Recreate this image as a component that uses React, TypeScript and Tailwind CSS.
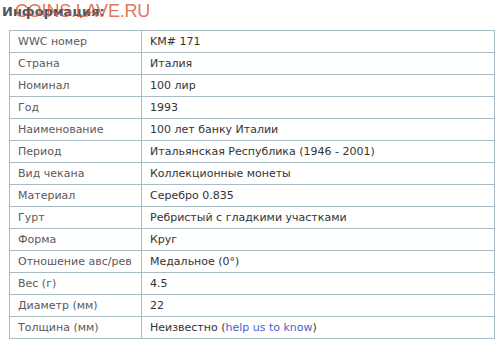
const rows: [string, React.ReactNode][] = [
  ["WWC номер", "KM# 171"],
  ["Страна", "Италия"],
  ["Номинал", "100 лир"],
  ["Год", "1993"],
  ["Наименование", "100 лет банку Италии"],
  ["Период", "Итальянская Республика (1946 - 2001)"],
  ["Вид чекана", "Коллекционные монеты"],
  ["Материал", "Серебро 0.835"],
  ["Гурт", "Ребристый с гладкими участками"],
  ["Форма", "Круг"],
  ["Отношение авс/рев", "Медальное (0°)"],
  ["Вес (г)", "4.5"],
  ["Диаметр (мм)", "22"],
  [
    "Толщина (мм)",
    <>
      Неизвестно (<a href="#" className="text-[#4a5fcf]">help us to know</a>)
    </>,
  ],
];

export default function App() {
  return (
    <div className="relative w-[500px] h-[352px] bg-white overflow-hidden font-['DejaVu_Sans',Verdana,sans-serif]">
      {/* Header */}
      <div className="relative h-[30px]">
        <h2 className="absolute left-[2px] top-[3px] text-[13px] font-bold text-[#4b5661] leading-[18px]">
          Информация:
        </h2>
        <div className="absolute left-[15px] top-[1px] text-[18px] leading-[20px] text-[#d9502a]/80 font-['Liberation_Sans',Arial,sans-serif] pointer-events-none tracking-[-0.2px]">
          COINS.LAVE.RU
        </div>
      </div>

      {/* Table */}
      <table className="ml-[9px] w-[486px] border-collapse text-[11px]">
        <tbody>
          {rows.map(([label, value], i) => (
            <tr key={i} className="h-[22px]">
              <td className="w-[132px] border border-[#a9bcc5] pl-[8px] py-0 text-[#5a5a5a] leading-[21px] whitespace-nowrap">
                {label}
              </td>
              <td className="border border-[#a9bcc5] pl-[8px] py-0 text-[#333] leading-[21px]">
                {value}
              </td>
            </tr>
          ))}
        </tbody>
      </table>
    </div>
  );
}
